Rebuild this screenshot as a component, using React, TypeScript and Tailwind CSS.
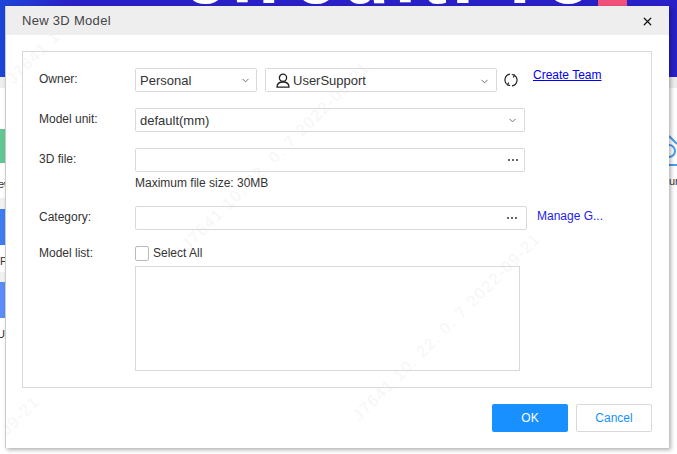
import { ChevronDown, X } from "lucide-react";

const arial = "font-['Liberation_Sans',Arial,sans-serif]";

function Label({ children, className = "" }: { children: string; className?: string }) {
  return <span className={`w-[96px] shrink-0 text-xs leading-[20px] text-[#333] ${arial} ${className}`}>{children}</span>;
}

function Dots({ className = "" }: { className?: string }) {
  return (
    <span className={`ml-auto flex gap-[2px] ${className}`}>
      <i className="h-[2px] w-[2px] rounded-full bg-[#333]" />
      <i className="h-[2px] w-[2px] rounded-full bg-[#333]" />
      <i className="h-[2px] w-[2px] rounded-full bg-[#333]" />
    </span>
  );
}

function Chevron({ className = "" }: { className?: string }) {
  return <ChevronDown size={11} strokeWidth={1.8} className={`ml-auto text-[#555] ${className}`} />;
}

function Field({ className, children }: { className: string; children?: React.ReactNode }) {
  return (
    <div className={`flex h-[24px] items-center rounded-[2px] border border-[#d9d9d9] pl-[4px] pr-[6px] pt-[2px] text-[13px] text-[#333] ${arial} ${className}`}>
      {children}
    </div>
  );
}

function Watermark({ className }: { className: string }) {
  return (
    <span className={`pointer-events-none absolute -z-10 -translate-x-1/2 -translate-y-1/2 -rotate-45 whitespace-nowrap text-[16px] tracking-[1.5px] text-[#f6f6f6] ${arial} ${className}`}>
      J7641 10. 22. 0. 7 2022-09-21
    </span>
  );
}

function UserIcon() {
  return (
    <svg width="14" height="15" viewBox="0 0 14 15" fill="none" stroke="#222" strokeWidth="1.3" className="mr-[3px] -mt-[1px] shrink-0">
      <circle cx="7" cy="4.8" r="3.6" />
      <path d="M1 14.2C1 10.8 3.5 9 7 9s6 1.8 6 5.2Z" />
    </svg>
  );
}

function RefreshIcon() {
  return (
    <svg width="14" height="14" viewBox="0 0 14 14" fill="none" stroke="#222" strokeWidth="1.2" className="ml-[7px] mt-[5px] shrink-0">
      <path d="M6 1.2A5.8 5.8 0 0 0 3.6 11.8" />
      <path d="M4.6 9.6 3.6 12l2.6.5" />
      <path d="M8 12.8A5.8 5.8 0 0 0 10.4 2.2" />
      <path d="M9.4 4.4 10.4 2 7.8 1.5" />
    </svg>
  );
}

export default function App() {
  return (
    <div className="relative h-[454px] w-[677px] overflow-hidden bg-white">
      {/* page behind the dialog */}
      <div className="h-[77px] overflow-hidden bg-[#2a20c8] bg-gradient-to-r from-[#1b46d8] to-[#2a20c8] to-[10%]">
        <div className="-mt-[63px] ml-[183px] flex items-start">
          <span className={`w-[415px] whitespace-nowrap text-[78px] leading-[78px] font-bold tracking-[5px] text-white ${arial}`}>circuitPro</span>
          <span className="mt-[40px] h-[29px] w-[29px] bg-[#f0507a]" />
        </div>
      </div>
      <div className="h-[11px] bg-[#eeeeee]" />
      <div className="flex justify-between">
        <div className={`w-[6px] overflow-hidden text-[11px] text-[#333] ${arial}`}>
          <div className="mt-[41px] h-[34px] bg-[#62c892]" />
          <div className="-ml-[10px] mt-[9px] h-[24px] leading-[24px]">New</div>
          <div className="mt-[2px] h-[11px] bg-[#f1f1f1]" />
          <div className="h-[36px] bg-[#3f7cf0]" />
          <div className="mt-[6px] h-[20px] leading-[20px]">P</div>
          <div className="mt-[1px] h-[10px] bg-[#f1f1f1]" />
          <div className="h-[36px] bg-[#5c8cfa]" />
          <div className="-ml-[3px] mt-[6px] h-[20px] leading-[20px]">U</div>
        </div>
        <div className={`w-[8px] overflow-hidden text-[11px] text-[#333] ${arial}`}>
          <svg width="8" height="32" viewBox="0 0 8 32" fill="none" stroke="#4a9bf0" strokeWidth="2" className="mt-[47px]">
            <path d="M0 1l8 8M8 30H0" />
            <path d="M0 10a5 5 0 0 1 0 12" />
          </svg>
          <div className="mt-[4px] leading-[20px]">ur</div>
        </div>
      </div>

      {/* dialog */}
      <div className="absolute left-[5px] top-[6px] isolate h-[442px] w-[664px] overflow-hidden border-l border-[#cccccc] bg-white shadow-[2px_2px_4px_rgba(0,0,0,0.3)]">
        <Watermark className="left-[95px] top-[-16px]" />
        <Watermark className="left-[270px] top-[150px]" />
        <Watermark className="left-[441px] top-[321px]" />
        <Watermark className="left-[-60px] top-[484px]" />

        <div className="flex h-[29px] items-center justify-between bg-[#eeeeee] pl-[16px] pr-[15px] pt-[1px]">
          <span className={`text-[13px] tracking-[0.3px] text-[#444] ${arial}`}>New 3D Model</span>
          <X size={13} strokeWidth={2.2} className="text-[#111]" />
        </div>

        <div className="ml-[16px] mt-[16px] h-[337px] w-[630px] border border-[#d9d9d9] pl-[16px] pt-[16px]">
          <div className="flex items-start">
            <Label className="pt-[1px]">Owner:</Label>
            <Field className="w-[122px]">
              Personal
              <Chevron className="-mr-[1px] mb-[2px]" />
            </Field>
            <Field className="ml-[8px] w-[232px] pl-[10px] pt-0">
              <UserIcon />
              UserSupport
              <Chevron />
            </Field>
            <RefreshIcon />
            <a className={`ml-[15px] mt-[-3px] text-xs leading-[20px] text-[#0000ee] underline ${arial}`}>Create Team</a>
          </div>

          <div className="mt-[16px] flex items-start">
            <Label className="pt-[1px]">Model unit:</Label>
            <Field className="w-[390px]">
              default(mm)
              <Chevron className="mb-[2px]" />
            </Field>
          </div>

          <div className="mt-[16px] flex items-start">
            <Label className="pt-[1px]">3D file:</Label>
            <div>
              <Field className="w-[390px]">
                <Dots className="mb-[2px]" />
              </Field>
              <p className={`mt-[2px] h-[18px] text-xs leading-[18px] text-[#333] ${arial}`}>Maximum file size: 30MB</p>
            </div>
          </div>

          <div className="mt-[14px] flex items-start">
            <Label className="pt-[1px]">Category:</Label>
            <Field className="w-[392px]">
              <Dots className="mb-[2px] mr-[3px]" />
            </Field>
            <a className={`ml-[10px] text-xs leading-[20px] text-[#2222ee] ${arial}`}>Manage G...</a>
          </div>

          <div className="mt-[15px] flex items-start">
            <Label className="-mt-[2px]">Model list:</Label>
            <div>
              <label className={`flex h-[16px] items-center text-xs text-[#333] ${arial}`}>
                <span className="h-[15px] w-[14px] rounded-[2px] border border-[#bbbbbb]" />
                <span className="ml-[4px]">Select All</span>
              </label>
              <div className="mt-[5px] h-[105px] w-[385px] border border-[#d9d9d9]" />
            </div>
          </div>
        </div>

        <div className={`mt-[16px] flex justify-end gap-[8px] pr-[17px] text-xs ${arial}`}>
          <button className="h-[28px] w-[76px] rounded-[2px] bg-[#1890ff] text-white">OK</button>
          <button className="h-[28px] w-[76px] rounded-[2px] border border-[#d9d9d9] text-[#1890ff]">Cancel</button>
        </div>
      </div>
    </div>
  );
}
